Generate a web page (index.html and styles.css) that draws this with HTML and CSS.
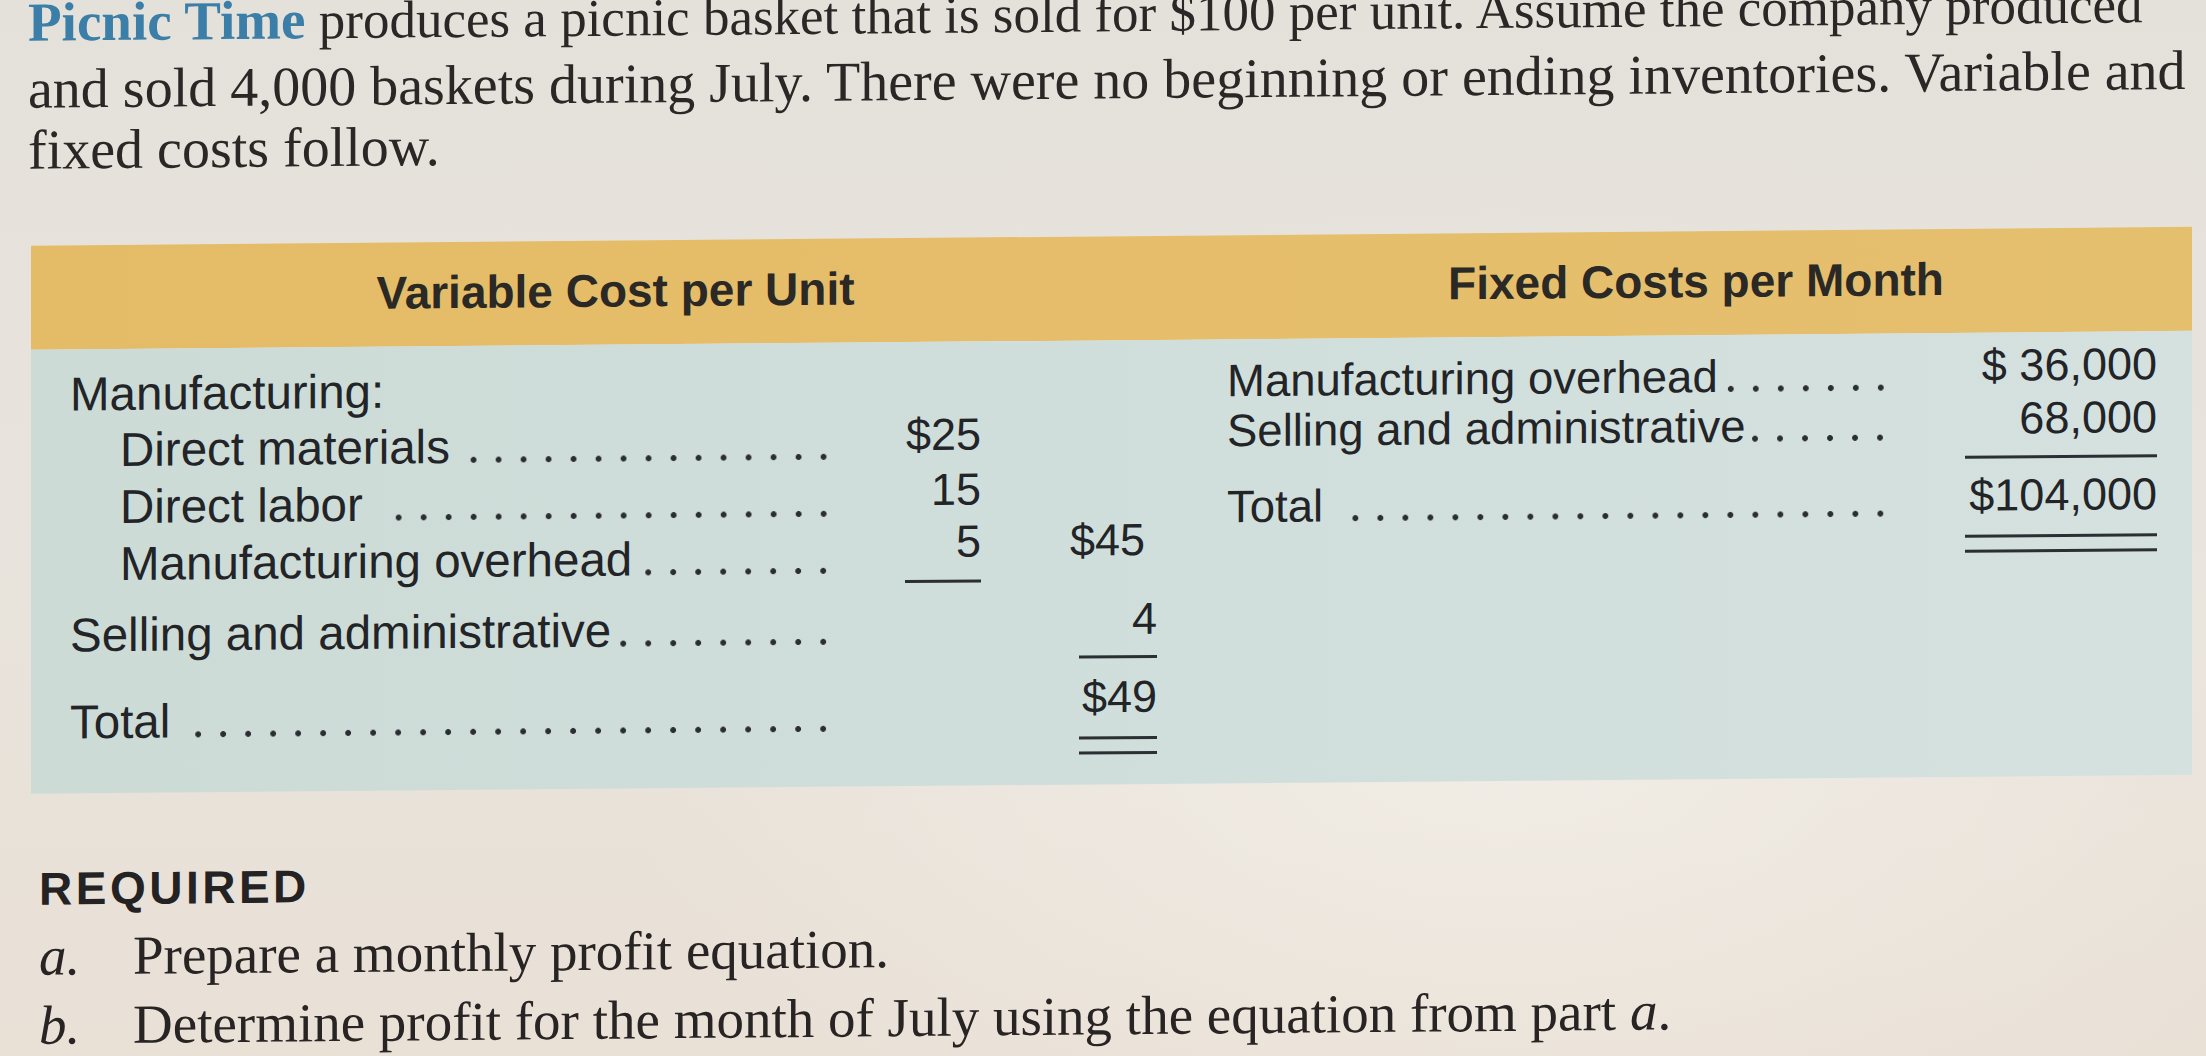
FILE: index.html
```html
<!DOCTYPE html>
<html lang="en">
<head>
<meta charset="utf-8">
<title>Picnic Time</title>
<link rel="stylesheet" href="styles.css">
</head>
<body>
<div class="page">
  <p class="intro">
    <span class="line l1"><span class="brand">Picnic Time</span> produces a picnic basket that is sold for $100 per unit. Assume the company produced</span>
    <span class="line l2">and sold 4,000 baskets during July. There were no beginning or ending inventories. Variable and</span>
    <span class="line l3">fixed costs follow.</span>
  </p>

  <div class="cost-table">
    <div class="thead">
      <div class="th">Variable Cost per Unit</div>
      <div class="th">Fixed Costs per Month</div>
    </div>
    <div class="tbody">
      <div class="var-list">
        <div class="lbl span3">Manufacturing:</div>

        <div class="lbl indent pad8"><span>Direct materials</span><span class="leader tight"></span></div>
        <div class="num">$25</div>
        <div class="num"></div>

        <div class="lbl indent pad10"><span>Direct labor</span><span class="leader"></span></div>
        <div class="num">15</div>
        <div class="num"></div>

        <div class="lbl indent pad15"><span>Manufacturing overhead</span><span class="leader tight"></span></div>
        <div class="num"><span class="ul ul-sm ul-16">5</span></div>
        <div class="num shift-l">$45</div>

        <div class="lbl pad7"><span>Selling and administrative</span><span class="leader tight"></span></div>
        <div class="num"></div>
        <div class="num"><span class="ul ul-md ul-14">4</span></div>

        <div class="lbl pad16"><span>Total</span><span class="leader"></span></div>
        <div class="num"></div>
        <div class="num"><span class="dbl ul-md">$49</span></div>
      </div>

      <div class="fix-list">
        <div class="lbl pad9"><span>Manufacturing overhead</span><span class="leader tight"></span></div>
        <div class="num">$&nbsp;36,000</div>

        <div class="lbl pad6"><span>Selling and administrative</span><span class="leader tight"></span></div>
        <div class="num"><span class="ul ul-lg ul-15">68,000</span></div>

        <div class="lbl pad5"><span>Total</span><span class="leader"></span></div>
        <div class="num"><span class="dbl ul-lg">$104,000</span></div>
      </div>
    </div>
  </div>

  <h2 class="required">REQUIRED</h2>
  <ol class="tasks">
    <li><span class="mark">a.</span><span>Prepare a monthly profit equation.</span></li>
    <li><span class="mark">b.</span><span>Determine profit for the month of July using the equation from part <i>a</i>.</span></li>
  </ol>
</div>
</body>
</html>
```

FILE: styles.css
```css
html, body {
  margin: 0;
  padding: 0;
}

body {
  width: 2206px;
  height: 1056px;
  overflow: hidden;
  background:
    radial-gradient(ellipse 900px 520px at 1500px 720px, rgba(244, 240, 233, 0.75), rgba(244, 240, 233, 0) 100%),
    linear-gradient(180deg, #e4e1da 0%, #e8e4dd 45%, #e9e0d6 100%);
  color: #2c2a2a;
}

.page {
  padding-left: 28px;
  transform: skewY(-0.5deg);
  transform-origin: 0 0;
}

/* ---------- intro paragraph ---------- */
.intro {
  margin: -9px 0 0;
  font-family: "Liberation Serif", "Times New Roman", serif;
  line-height: 64px;
  color: #2b2727;
  white-space: nowrap;
}

.line {
  display: block;
}

.l1 {
  font-size: 53px;
}

.l2 {
  font-size: 56px;
  padding-top: 2px;
}

.l3 {
  font-size: 56px;
  margin-top: -3px;
}

.brand {
  font-size: 55px;
  color: #3b7ea8;
  font-weight: bold;
}

/* ---------- table ---------- */
.cost-table {
  margin: 64px 0 0 3px;
  width: 2161px;
  font-family: "Liberation Sans", Arial, sans-serif;
  color: #222427;
}

.thead {
  display: grid;
  grid-template-columns: 1169px 992px;
  height: 104px;
  align-items: center;
  background: linear-gradient(90deg, #e4bb66 0%, #e6be6b 50%, #e4bf6e 100%);
}

.th {
  text-align: center;
  font-weight: bold;
  font-size: 46px;
  color: #2a2925;
  padding-bottom: 4px;
}

.tbody {
  display: grid;
  grid-template-columns: 1169px 992px;
  height: 444px;
  background: linear-gradient(90deg, #cddbd7 0%, #d1dfdc 55%, #d4e1df 100%);
  font-size: 45px;
  line-height: 57px;
}

.var-list {
  display: grid;
  grid-template-columns: 770px 141px 176px;
  grid-template-rows: 48px 55px 52px 79px 78px auto;
  padding: 16px 0 0 39px;
  align-content: start;
}

.var-list .lbl {
  font-size: 47.5px;
}

.fix-list {
  display: grid;
  grid-template-columns: 670px 260px;
  grid-template-rows: 53px 77px auto;
  padding: 4px 0 0 27px;
  align-content: start;
}

.fix-list .lbl {
  font-size: 45.5px;
}

.lbl {
  display: flex;
  align-items: baseline;
  white-space: nowrap;
}

.span3 {
  grid-column: 1 / span 3;
}

.indent {
  padding-left: 50px;
}

.pad5 { padding-top: 5px; }
.pad6 { padding-top: 6px; }
.pad7 { padding-top: 7px; }
.pad8 { padding-top: 8px; }
.pad9 { padding-top: 9px; }
.pad10 { padding-top: 10px; }
.pad15 { padding-top: 15px; }
.pad16 { padding-top: 16px; }

.leader {
  flex: 1;
  height: 6px;
  margin-left: 14px;
  background-image: radial-gradient(circle, #2a2d31 0 2.6px, rgba(42, 45, 49, 0) 3.2px);
  background-size: 25px 6px;
  background-repeat: repeat-x;
  background-position: right 4px bottom;
}

.leader.tight {
  margin-left: 2px;
}

.num {
  text-align: right;
  white-space: nowrap;
}

.shift-l {
  padding-right: 12px;
}

.ul {
  display: inline-block;
  text-align: right;
  line-height: 1;
  border-bottom: 3px solid #2b2e32;
}

.ul-14 { padding-bottom: 14px; }
.ul-15 { padding-bottom: 15px; }
.ul-16 { padding-bottom: 16px; }

.ul-sm { width: 76px; }
.ul-md { width: 78px; }
.ul-lg { width: 192px; }

.dbl {
  display: inline-block;
  text-align: right;
  line-height: 1;
}

.dbl::after {
  content: "";
  display: block;
  margin-top: 17px;
  height: 12px;
  border-top: 3px solid #2b2e32;
  border-bottom: 3px solid #2b2e32;
}

/* ---------- required ---------- */
.required {
  margin: 67px 0 0;
  padding-left: 11px;
  font-family: "Liberation Sans", Arial, sans-serif;
  font-weight: bold;
  font-size: 46px;
  line-height: 56px;
  letter-spacing: 3.5px;
  color: #242222;
}

.tasks {
  list-style: none;
  margin: 5px 0 0;
  padding: 0 0 0 11px;
  font-family: "Liberation Serif", "Times New Roman", serif;
  font-size: 55px;
  line-height: 69px;
  color: #282424;
}

.tasks li {
  display: flex;
  white-space: nowrap;
}

.mark {
  width: 94px;
  font-style: italic;
  flex: none;
}
```
